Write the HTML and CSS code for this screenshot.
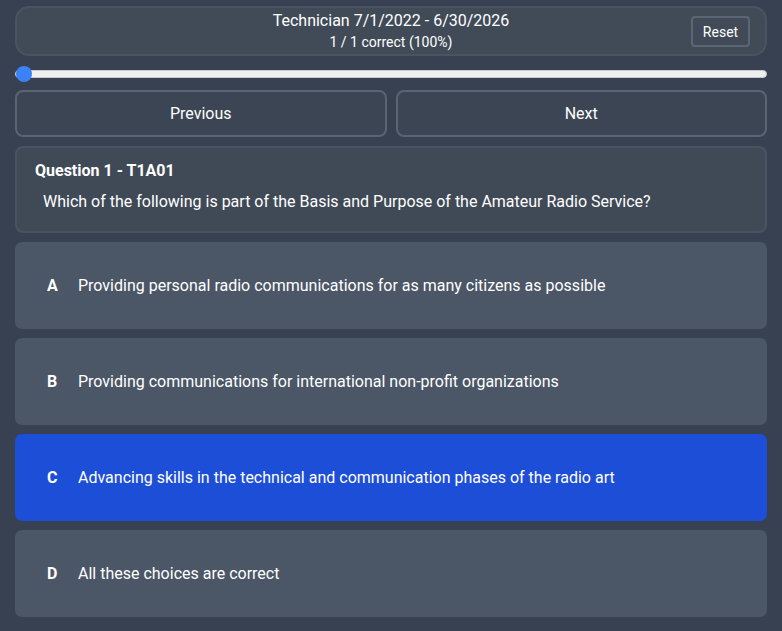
FILE: index.html
```html
<!DOCTYPE html>
<html lang="en">
<head>
<meta charset="utf-8">
<title>Quiz</title>
<link rel="stylesheet" href="styles.css">
</head>
<body>
<div class="app">
  <header class="header">
    <div class="header-text">
      <div class="title">Technician 7/1/2022 - 6/30/2026</div>
      <div class="score">1 / 1 correct (100%)</div>
    </div>
    <button class="reset">Reset</button>
  </header>
  <div class="slider-row">
    <input class="slider" type="range" min="0" max="100" value="0">
  </div>
  <div class="nav">
    <button class="nav-btn">Previous</button>
    <button class="nav-btn">Next</button>
  </div>
  <section class="question">
    <div class="q-title">Question 1 - T1A01</div>
    <div class="q-text">Which of the following is part of the Basis and Purpose of the Amateur Radio Service?</div>
  </section>
  <div class="options">
    <div class="option"><span class="letter">A</span><span class="opt-text">Providing personal radio communications for as many citizens as possible</span></div>
    <div class="option"><span class="letter">B</span><span class="opt-text">Providing communications for international non-profit organizations</span></div>
    <div class="option selected"><span class="letter">C</span><span class="opt-text">Advancing skills in the technical and communication phases of the radio art</span></div>
    <div class="option"><span class="letter">D</span><span class="opt-text">All these choices are correct</span></div>
  </div>
</div>
</body>
</html>
```
FILE: styles.css
```css
html, body {
  margin: 0;
  padding: 0;
  background: #374151;
  font-family: Roboto, "Liberation Sans", sans-serif;
  color: #ffffff;
}
.app {
  padding: 6px 15px 0 15px;
  display: flex;
  flex-direction: column;
}
.header {
  box-sizing: border-box;
  height: 50px;
  border: 2px solid #4a5361;
  border-radius: 14px;
  background: #414b58;
  display: flex;
  align-items: center;
  justify-content: center;
  position: relative;
}
.header-text {
  text-align: center;
}
.title {
  font-size: 16px;
  line-height: 20px;
  margin-top: 0;
}
.score {
  font-size: 14px;
  line-height: 18px;
  margin-top: 2px;
}
.reset {
  position: absolute;
  right: 15px;
  top: 8px;
  width: 59px;
  height: 31px;
  box-sizing: border-box;
  background: transparent;
  border: 2px solid #5b6574;
  border-radius: 4px;
  color: #ffffff;
  font-family: Roboto, "Liberation Sans", sans-serif;
  font-size: 14px;
  padding: 0;
}
.slider-row {
  box-sizing: border-box;
  height: 34px;
  padding-top: 2px;
  display: flex;
  align-items: center;
}
.slider {
  -webkit-appearance: none;
  appearance: none;
  width: 100%;
  margin: 0;
  height: 8px;
  background: #efefef;
  border: 1px solid #c9c9c9;
  border-radius: 4px;
  box-sizing: border-box;
}
.slider::-webkit-slider-thumb {
  -webkit-appearance: none;
  appearance: none;
  width: 16px;
  height: 16px;
  border-radius: 50%;
  background: #3b82f6;
  border: none;
}
.nav {
  display: grid;
  grid-template-columns: 1fr 1fr;
  gap: 9px;
}
.nav-btn {
  box-sizing: border-box;
  height: 47px;
  background: #3c4553;
  border: 2px solid #5a6473;
  border-radius: 8px;
  color: #ffffff;
  font-family: Roboto, "Liberation Sans", sans-serif;
  font-size: 16px;
}
.question {
  box-sizing: border-box;
  margin-top: 9px;
  height: 87px;
  background: #404a57;
  border: 2px solid #4a5361;
  border-radius: 8px;
  padding: 13px 18px 0 18px;
}
.q-title {
  font-weight: bold;
  font-size: 16px;
  line-height: 20px;
}
.q-text {
  font-size: 16px;
  line-height: 20px;
  margin-top: 11px;
  padding-left: 8px;
}
.options {
  margin-top: 9px;
  display: flex;
  flex-direction: column;
  gap: 9px;
}
.option {
  box-sizing: border-box;
  height: 87px;
  background: #4b5666;
  border-radius: 7px;
  display: flex;
  align-items: center;
  padding-left: 32px;
  font-size: 16px;
}
.option.selected {
  background: #1d4ed8;
}
.letter {
  font-weight: bold;
  width: 31px;
}
```
